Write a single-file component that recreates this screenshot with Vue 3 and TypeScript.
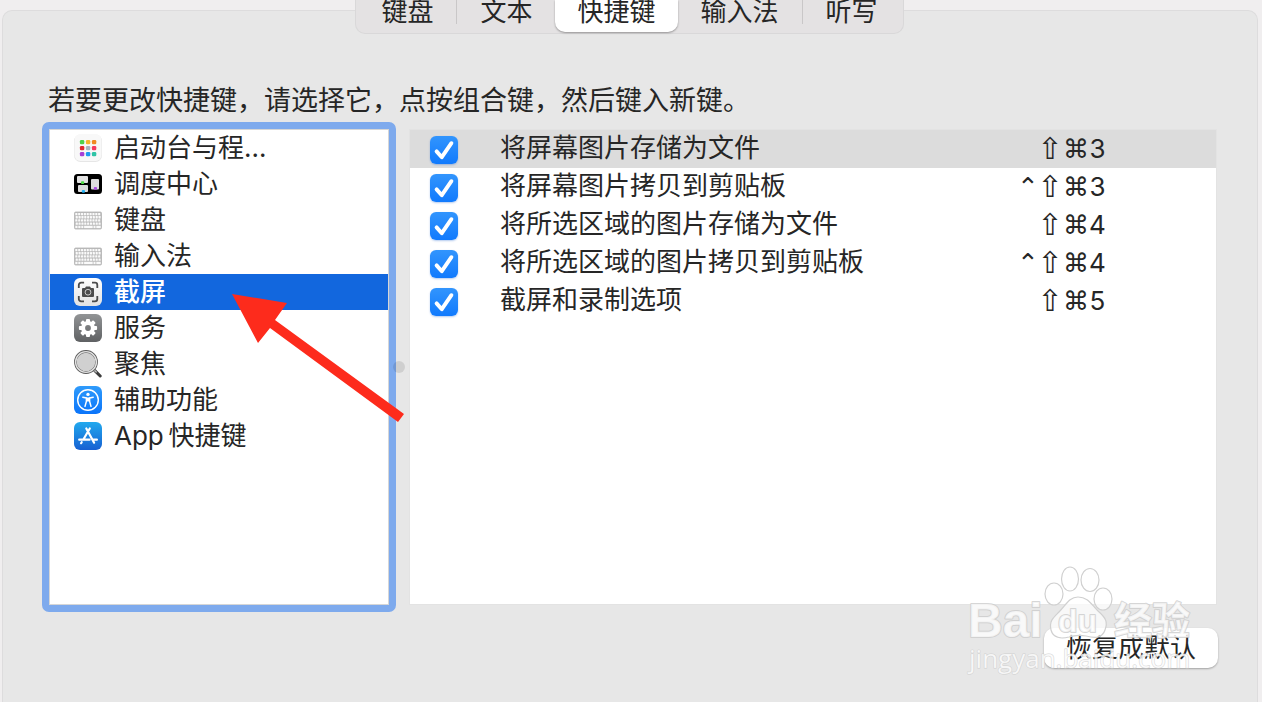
<script setup lang="ts">
import { ref } from 'vue'

interface Category {
  icon: string
  label: string
}
interface Shortcut {
  label: string
  keys: string[]
  enabled: boolean
}

const tabs: string[] = ['键盘', '文本', '快捷键', '输入法', '听写']
const activeTab = ref('快捷键')

const categories: Category[] = [
  { icon: 'launchpad', label: '启动台与程…' },
  { icon: 'mission', label: '调度中心' },
  { icon: 'keyboard', label: '键盘' },
  { icon: 'keyboard', label: '输入法' },
  { icon: 'screenshot', label: '截屏' },
  { icon: 'services', label: '服务' },
  { icon: 'spotlight', label: '聚焦' },
  { icon: 'accessibility', label: '辅助功能' },
  { icon: 'appstore', label: 'App\u2009快捷键' },
]
const activeCategory = ref('截屏')

const shortcuts = ref<Shortcut[]>([
  { label: '将屏幕图片存储为文件', keys: ['⇧', '⌘', '3'], enabled: true },
  { label: '将屏幕图片拷贝到剪贴板', keys: ['⌃', '⇧', '⌘', '3'], enabled: true },
  { label: '将所选区域的图片存储为文件', keys: ['⇧', '⌘', '4'], enabled: true },
  { label: '将所选区域的图片拷贝到剪贴板', keys: ['⌃', '⇧', '⌘', '4'], enabled: true },
  { label: '截屏和录制选项', keys: ['⇧', '⌘', '5'], enabled: true },
])
const activeShortcut = ref(0)

const dotColors: string[] = [
  '#4fd04a', '#f5b52b', '#f08a24',
  '#e0282e', '#a9b4c0', '#f5385f',
  '#a63fd6', '#1f9bf0', '#2fc4a6',
]
const keyRows: number[] = [0, 1, 2, 3]
const gearTeeth: number[] = [0, 45, 90, 135, 180, 225, 270, 315]

function keyClass(key: string): string {
  if (key === '⌃') return 'key control'
  if (key === '⇧') return 'key shift'
  return /\d/.test(key) ? 'key digit' : 'key symbol'
}

function restoreDefaults(): void {
  shortcuts.value.forEach((s) => (s.enabled = true))
}
</script>

<template>
  <div class="page">
    <main class="panel">
      <nav class="tabs" aria-label="键盘设置">
        <button
          v-for="tab in tabs"
          :key="tab"
          type="button"
          class="tab"
          :class="{ active: tab === activeTab }"
          @click="activeTab = tab"
        >{{ tab }}</button>
      </nav>

      <p class="hint">若要更改快捷键，请选择它，点按组合键，然后键入新键。</p>

      <div class="columns">
        <ul class="categories">
          <li v-for="item in categories" :key="item.label">
            <button
              type="button"
              class="category"
              :class="{ selected: item.label === activeCategory }"
              @click="activeCategory = item.label"
            >
              <svg class="icon" viewBox="0 0 28 28" aria-hidden="true">
                <defs>
                  <linearGradient id="grayFill" x1="0" y1="0" x2="0" y2="1">
                    <stop offset="0" stop-color="#929496" />
                    <stop offset="1" stop-color="#5f6163" />
                  </linearGradient>
                  <linearGradient id="blueFill" x1="0" y1="0" x2="0" y2="1">
                    <stop offset="0" stop-color="#2f9bfb" />
                    <stop offset="1" stop-color="#0a74fa" />
                  </linearGradient>
                  <linearGradient id="storeFill" x1="0" y1="0" x2="0" y2="1">
                    <stop offset="0" stop-color="#22a9ee" />
                    <stop offset="1" stop-color="#1660d2" />
                  </linearGradient>
                  <linearGradient id="whiteFill" x1="0" y1="0" x2="0" y2="1">
                    <stop offset="0" stop-color="#ffffff" />
                    <stop offset="1" stop-color="#e2e2e2" />
                  </linearGradient>
                </defs>
                <g v-if="item.icon === 'launchpad'">
                  <rect x="0" y="0.5" width="28" height="27.5" rx="6.5" fill="#e6e6e6" />
                  <rect x="0.5" y="0" width="27" height="27" rx="6" fill="#f8f8f8" />
                  <rect
                    v-for="(color, i) in dotColors"
                    :key="i"
                    :x="5.9 + (i % 3) * 6"
                    :y="5.9 + Math.floor(i / 3) * 6"
                    width="4.4"
                    height="4.4"
                    rx="1.3"
                    :fill="color"
                  />
                </g>
                <g v-else-if="item.icon === 'mission'">
                  <rect x="0" y="4" width="28" height="20" rx="3.5" fill="#000" />
                  <rect x="3" y="6" width="11" height="7" rx="1" fill="#e2e2e2" />
                  <rect x="4" y="15" width="10" height="7" rx="1" fill="#dcdcdc" />
                  <rect x="17" y="9" width="8" height="10.5" rx="1" fill="#dcdcdc" />
                  <rect x="7" y="11.3" width="3.2" height="2.6" rx="1" fill="#4fdc44" />
                  <rect x="7.8" y="20" width="3.2" height="2.8" rx="1" fill="#22b3f5" />
                  <rect x="19.8" y="17" width="3.2" height="2.8" rx="1" fill="#a94be0" />
                </g>
                <g v-else-if="item.icon === 'keyboard'">
                  <rect x="0.5" y="6" width="27" height="17" rx="1.2" fill="#bdbdbd" stroke="#b2b2b2" stroke-width="0.8" />
                  <g v-for="row in keyRows" :key="row" fill="#fafafa">
                    <rect
                      v-for="k in 9"
                      :key="k"
                      :x="1.3 + (k - 1) * 2.85 + (row % 2) * 0.4"
                      :y="6.9 + row * 3.2"
                      width="2.1"
                      height="2.3"
                      rx="0.4"
                    />
                  </g>
                  <g fill="#fafafa">
                    <rect x="1.3" y="19.8" width="2.2" height="2.3" />
                    <rect x="4.3" y="19.8" width="2.2" height="2.3" />
                    <rect x="7.3" y="19.8" width="2" height="2.3" />
                    <rect x="10.1" y="19.8" width="8.6" height="2.3" />
                    <rect x="19.5" y="19.8" width="2" height="2.3" />
                    <rect x="22.3" y="19.8" width="4.4" height="2.3" />
                  </g>
                </g>
                <g v-else-if="item.icon === 'screenshot'">
                  <rect x="0" y="0" width="28" height="28" rx="6" fill="url(#whiteFill)" />
                  <path
                    d="M4.8 10V7a2.3 2.3 0 0 1 2.3-2.3h3M18 4.7h3A2.3 2.3 0 0 1 23.3 7v3M23.3 18v3a2.3 2.3 0 0 1-2.3 2.3h-3M10 23.3H7.1A2.3 2.3 0 0 1 4.8 21v-3"
                    fill="none"
                    stroke="#4b4b4b"
                    stroke-width="1.8"
                  />
                  <path d="M9 10h2l1-1.5h4l1 1.5h2a1 1 0 0 1 1 1v7a1 1 0 0 1-1 1H9a1 1 0 0 1-1-1v-7a1 1 0 0 1 1-1z" fill="#4b4b4b" />
                  <circle cx="14" cy="14.2" r="2.9" fill="#4b4b4b" stroke="#d8d8d8" stroke-width="0.9" />
                </g>
                <g v-else-if="item.icon === 'services'">
                  <rect x="0" y="0" width="28" height="28" rx="6" fill="url(#grayFill)" />
                  <rect
                    v-for="angle in gearTeeth"
                    :key="angle"
                    x="12"
                    y="4.9"
                    width="4"
                    height="5"
                    rx="1"
                    fill="#fff"
                    :transform="`rotate(${angle} 14 14)`"
                  />
                  <circle cx="14" cy="14" r="4.9" fill="none" stroke="#fff" stroke-width="4" />
                </g>
                <g v-else-if="item.icon === 'spotlight'">
                  <path d="M20.8 20.6l5.4 5.4" stroke="#3c3c3c" stroke-width="3" stroke-linecap="round" />
                  <path d="M19.6 19.6l2.6 2.4" stroke="#b9b9b9" stroke-width="1.6" stroke-linecap="round" />
                  <circle cx="12" cy="12" r="10.6" fill="#d0d0d0" stroke="#5a5a5a" stroke-width="2.6" />
                  <circle cx="12" cy="12" r="10.4" fill="none" stroke="#e2e2e2" stroke-width="1.4" />
                </g>
                <g v-else-if="item.icon === 'accessibility'">
                  <rect x="0" y="0" width="28" height="28" rx="6" fill="url(#blueFill)" />
                  <circle cx="14" cy="14" r="10.3" fill="none" stroke="#fff" stroke-width="1.4" />
                  <circle cx="14" cy="8.4" r="1.7" fill="#fff" />
                  <path
                    d="M8.8 11.2l3.6.8v3.4l-1.4 5M19.2 11.2l-3.6.8v3.4l1.4 5"
                    fill="none"
                    stroke="#fff"
                    stroke-width="1.5"
                    stroke-linecap="round"
                    stroke-linejoin="round"
                  />
                  <path d="M12 11.4h4v4.4h-1.2L14 15l-.8.8H12z" fill="#fff" />
                </g>
                <g v-else>
                  <rect x="0" y="0" width="28" height="28" rx="6" fill="url(#storeFill)" />
                  <path
                    d="M12.3 6.5l7.8 14.2M15.8 6.5L9.5 17.3M5.2 17.7h10.4M19.5 17.7h3.4M7.7 20.2l-.6 1"
                    fill="none"
                    stroke="#fff"
                    stroke-width="2.2"
                    stroke-linecap="round"
                  />
                </g>
              </svg>
              <span>{{ item.label }}</span>
            </button>
          </li>
        </ul>

        <div class="divider"><span class="grip"></span></div>

        <div class="shortcuts">
          <table>
            <tbody>
              <tr
                v-for="(item, i) in shortcuts"
                :key="item.label"
                :class="{ current: i === activeShortcut }"
                @click="activeShortcut = i"
              >
                <td class="cell-check">
                  <span class="check">
                    <input :id="`shortcut-${i}`" v-model="item.enabled" type="checkbox" />
                    <svg v-if="item.enabled" viewBox="0 0 28 28" aria-hidden="true">
                      <path d="M6.6 15.4l5.2 5.8L21.4 7.2" fill="none" stroke="#fff" stroke-width="3.9" stroke-linecap="round" stroke-linejoin="round" />
                    </svg>
                  </span>
                </td>
                <td class="cell-label"><label :for="`shortcut-${i}`">{{ item.label }}</label></td>
                <td class="cell-keys">
                  <span class="keys"><span v-for="key in item.keys" :key="key" :class="keyClass(key)">{{ key }}</span></span>
                </td>
              </tr>
            </tbody>
          </table>
        </div>
      </div>

      <div class="footer">
        <button type="button" class="restore" @click="restoreDefaults">恢复成默认</button>
      </div>

      <svg class="arrow" viewBox="0 0 174 132" aria-hidden="true">
        <path d="M0 2L55 11L43 28L172 122L166 130L38 36L26 51Z" fill="#fd2b1c" />
      </svg>
    </main>

    <svg class="watermark" viewBox="0 0 240 120" aria-hidden="true">
      <g fill="#fff" fill-opacity="0.7" stroke="#d0d0d0" stroke-width="1.2">
        <ellipse cx="94" cy="34" rx="9" ry="11" />
        <ellipse cx="110" cy="19" rx="8.5" ry="12" />
        <ellipse cx="130" cy="20" rx="9" ry="11.5" />
        <ellipse cx="143" cy="39" rx="9" ry="11" />
        <path d="M118 37C128 37 131 44 138 51C146 58 148 62 145 70C142 79 134 78 126 76C120 75 115 75 109 77C101 79 93 78 91 70C89 61 93 58 99 52C106 45 109 37 118 37Z" />
      </g>
      <g class="mark">
        <text class="bai" x="8" y="77">Bai</text>
        <text class="du" x="98" y="72">du</text>
        <text class="jingyan" x="154" y="74">经验</text>
        <text class="site" x="9" y="108">jingyan.baidu.com</text>
      </g>
    </svg>
  </div>
</template>

<style>
html,
body {
  margin: 0;
  background: #f0eeef;
}
</style>

<style scoped>
* {
  box-sizing: border-box;
}

.page {
  position: relative;
  height: 100vh;
  min-height: 702px;
  padding: 10px 4px 0 2px;
  overflow: hidden;
  background: #f0eeef;
  color: #262626;
  font-family: Inter, "Noto Sans CJK SC", sans-serif;
  font-size: 26px;
  line-height: 36px;
}

button {
  margin: 0;
  padding: 0;
  border: 0;
  background: none;
  color: inherit;
  font: inherit;
}

.panel {
  position: relative;
  height: 100%;
  padding: 0 40px 0 39px;
  border: 1px solid #dddcdd;
  border-bottom: 0;
  border-radius: 10px 10px 0 0;
  background: #e7e7e7;
}

.tabs {
  display: flex;
  width: max-content;
  height: 34px;
  margin: -11px auto 0;
  border: 1px solid #d9d8d9;
  border-top: 0;
  border-radius: 0 0 10px 10px;
  background: #e4e2e3;
}

.tab {
  display: flex;
  align-items: center;
  height: 24px;
  padding: 0 23px;
  line-height: 24px;
}

.tab:first-child {
  padding-left: 25px;
}

.tab:last-child {
  padding-right: 25px;
}

.tab:first-child,
.tab:nth-child(4) {
  border-right: 1px solid #c9c7c8;
}

.tab.active {
  height: 32px;
  padding: 0 22px 8px;
  border-radius: 0 0 10px 10px;
  background: #fff;
  box-shadow: 0 1px 2px rgba(0, 0, 0, 0.35);
}

.hint {
  margin: 49px 0 3px;
  padding-left: 6px;
  font-size: 27px;
}

.columns {
  display: flex;
}

.categories {
  flex: none;
  width: 354px;
  height: 490px;
  margin: 0;
  padding: 0;
  border: 7px solid #7eaaed;
  border-radius: 7px;
  outline: 1px solid #d6d6d6;
  outline-offset: -8px;
  background: #fff;
  list-style: none;
}

.categories li:first-child {
  margin-top: 1px;
}

.category {
  display: flex;
  align-items: center;
  gap: 12px;
  width: 338px;
  height: 36px;
  margin-left: 1px;
  padding-left: 24px;
  text-align: left;
}

.category.selected {
  background: #1267de;
  color: #fff;
  font-weight: 500;
}

.icon {
  flex: none;
  width: 28px;
  height: 28px;
}

.divider {
  display: flex;
  align-items: center;
  justify-content: center;
  flex: none;
  width: 13px;
}

.grip {
  flex: none;
  width: 12px;
  height: 12px;
  margin-right: 7px;
  border-radius: 50%;
  background: rgba(0, 0, 0, 0.1);
}

.shortcuts {
  flex: 1;
  margin: 7px 0;
  border: 1px solid #e3e3e3;
  background: #fff;
}

table {
  width: 100%;
  border-collapse: collapse;
}

tr {
  height: 38px;
}

tr.current {
  background: #dcdcdc;
}

td {
  padding: 0;
  line-height: 36px;
  vertical-align: top;
}

.cell-check {
  width: 90px;
  padding: 6px 0 0 20px;
}

.check {
  display: grid;
  width: 28px;
  height: 28px;
}

.check input,
.check svg {
  grid-area: 1 / 1;
  width: 28px;
  height: 28px;
  margin: 0;
}

.check input {
  appearance: none;
  border: 1px solid #c4c4c4;
  border-radius: 6px;
  background: #fff;
  box-shadow: 0 1px 2px rgba(0, 80, 200, 0.3);
}

.check input:checked {
  border: 0;
  background: linear-gradient(#3295fd, #117afd);
}

.check svg {
  pointer-events: none;
}

.cell-keys {
  padding-right: 110px;
}

.keys {
  display: flex;
  justify-content: flex-end;
  line-height: 38px;
}

.key {
  width: 26px;
  text-align: center;
}

.key.symbol,
.key.shift,
.key.control {
  font-family: "DejaVu Sans", sans-serif;
}

.key.shift {
  font-size: 30px;
}

.key.control {
  width: 20px;
}

.key.digit {
  width: 17px;
}

.footer {
  display: flex;
  justify-content: flex-end;
  padding-top: 16px;
}

.restore {
  width: 174px;
  height: 40px;
  margin-right: -1px;
  border-radius: 10px;
  background: #fff;
  box-shadow: 0 1px 2px rgba(0, 0, 0, 0.3);
}

.arrow {
  position: absolute;
  top: 281px;
  left: 229px;
  width: 174px;
  height: 132px;
  pointer-events: none;
}

.watermark {
  position: absolute;
  right: 62px;
  bottom: 22px;
  width: 240px;
  height: 120px;
  pointer-events: none;
}

.mark text {
  fill: #fff;
  fill-opacity: 0.75;
  stroke: #cbcbcb;
  stroke-width: 2px;
  stroke-opacity: 0.8;
  stroke-linejoin: round;
  paint-order: stroke;
  font-family: "Liberation Sans", "Noto Sans CJK SC", sans-serif;
  font-weight: 700;
}

.mark .bai {
  font-size: 48px;
}

.mark .du {
  font-size: 32px;
}

.mark .jingyan {
  font-size: 38px;
}

.mark .site {
  stroke-width: 1px;
  font-family: "Open Sans", sans-serif;
  font-size: 26px;
  font-weight: 400;
}
</style>
